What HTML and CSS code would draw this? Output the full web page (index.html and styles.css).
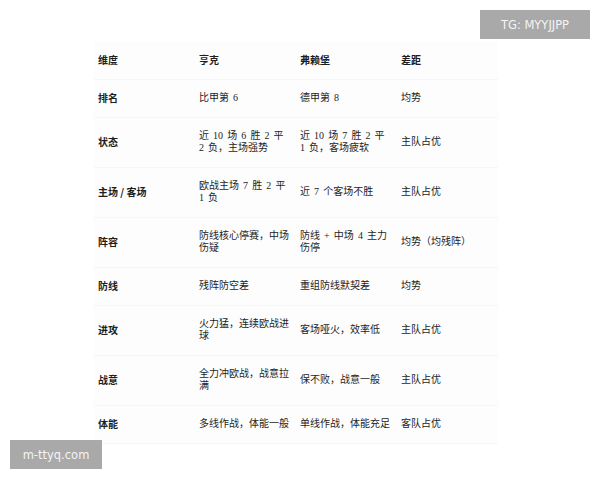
FILE: index.html
```html
<!DOCTYPE html>
<html lang="zh">
<head>
<meta charset="utf-8">
<link rel="stylesheet" href="styles.css">
</head>
<body>
<div class="page">
  <table class="cmp">
    <colgroup><col><col><col><col></colgroup>
    <thead>
      <tr><th>维度</th><th>亨克</th><th>弗赖堡</th><th>差距</th></tr>
    </thead>
    <tbody>
      <tr><th>排名</th><td>比甲第 6</td><td>德甲第 8</td><td>均势</td></tr>
      <tr><th>状态</th><td>近 10 场 6 胜 2 平 2 负，主场强势</td><td>近 10 场 7 胜 2 平 1 负，客场疲软</td><td>主队占优</td></tr>
      <tr><th>主场 / 客场</th><td>欧战主场 7 胜 2 平 1 负</td><td>近 7 个客场不胜</td><td>主队占优</td></tr>
      <tr><th>阵容</th><td>防线核心停赛，中场伤疑</td><td>防线 + 中场 4 主力伤停</td><td>均势（均残阵）</td></tr>
      <tr><th>防线</th><td>残阵防空差</td><td>重组防线默契差</td><td>均势</td></tr>
      <tr><th>进攻</th><td>火力猛，连续欧战进球</td><td>客场哑火，效率低</td><td>主队占优</td></tr>
      <tr><th>战意</th><td>全力冲欧战，战意拉满</td><td>保不败，战意一般</td><td>主队占优</td></tr>
      <tr><th>体能</th><td>多线作战，体能一般</td><td>单线作战，体能充足</td><td>客队占优</td></tr>
    </tbody>
  </table>
  <div class="mark mark-tg">TG: MYYJJPP</div>
  <div class="mark mark-site">m-ttyq.com</div>
</div>
</body>
</html>
```

FILE: styles.css
```css
html, body {
  margin: 0;
  padding: 0;
  background: #ffffff;
}
.page {
  position: relative;
  width: 600px;
  height: 480px;
  overflow: hidden;
  padding-top: 42px;
  box-sizing: border-box;
}
.cmp {
  margin-left: 94px;
  border-collapse: collapse;
  table-layout: fixed;
  width: 404px;
  font-family: "Liberation Serif", "Noto Sans CJK SC", serif;
  font-size: 10px;
  line-height: 12px;
  word-spacing: 1.6px;
  color: #1e1e1e;
}
.cmp col {
  width: 101px;
}
.cmp th,
.cmp td {
  padding: 12px 6px 13px 4px;
  height: 12px;
  line-height: 12px;
  text-align: left;
  vertical-align: middle;
  border-bottom: 1px solid #f6f6f6;
  background: #fdfdfd;
}
.cmp th {
  font-weight: bold;
  font-family: "Noto Sans CJK SC", sans-serif;
  word-spacing: 0;
}
.cmp td {
  font-weight: normal;
}
.mark {
  position: absolute;
  background: #a9a9a9;
  color: #f4f4f4;
  font-family: "DejaVu Sans", sans-serif;
  font-size: 11.5px;
  height: 29px;
  display: flex;
  align-items: center;
  justify-content: center;
}
.mark-tg {
  top: 10px;
  left: 480px;
  width: 110px;
}
.mark-site {
  top: 440px;
  left: 10px;
  width: 92px;
}
```
